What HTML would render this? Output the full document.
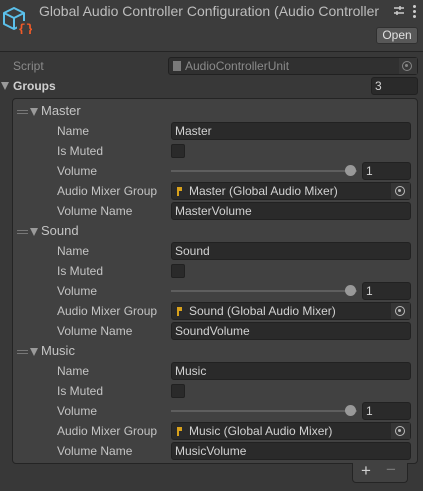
<!DOCTYPE html>
<html><head><meta charset="utf-8"><style>
*{margin:0;padding:0;box-sizing:border-box}
body{width:423px;height:491px;background:#383838;font-family:"Liberation Sans",sans-serif;font-size:12px;color:#c4c4c4;position:relative;overflow:hidden}
.a{position:absolute;white-space:nowrap}
.f{position:absolute;background:#2a2a2a;border:1px solid #212121;border-radius:3px;height:18px;line-height:16px;padding-left:3px;color:#d2d2d2}
.lbl{position:absolute;left:57px;line-height:20px}
.obj{position:absolute;left:171px;width:240px;height:18px;background:#2a2a2a;border:1px solid #212121;border-radius:3px;line-height:16px;padding-left:17px;color:#d2d2d2}
.obj .ic{position:absolute;left:5px;top:4px;width:5px;height:9px;background:#d9a21b}
.obj .ic:after{content:"";position:absolute;left:2px;top:4px;width:3px;height:5px;background:#2a2a2a}
.obj .t{position:absolute;right:0;top:0;width:19px;height:16px;background:#353535}
.tg{position:absolute;right:5px;top:3px;width:10px;height:10px;border:1.5px solid #bbb;border-radius:50%}
.tg:after{content:"";position:absolute;left:2px;top:2px;width:3px;height:3px;background:#bbb;border-radius:50%}
.tri{position:absolute;width:0;height:0;border-left:4.5px solid transparent;border-right:4.5px solid transparent;border-top:8px solid #9a9a9a}
.cb{position:absolute;left:171px;width:14px;height:14px;background:#2a2a2a;border:1px solid #212121;border-radius:2px}
.sl{position:absolute;left:171px;width:186px;height:2px;background:#5e5e5e}
.kn{position:absolute;left:345px;width:11px;height:11px;border-radius:50%;background:#999}
</style></head><body>
<div class="a" style="left:0;top:0;width:423px;height:52px;background:#3c3c3c;border-bottom:1px solid #242424"></div>
<svg class="a" style="left:2px;top:6px" width="30" height="28" viewBox="0 0 30 28">
<path d="M12 2 L22 7 L22 18 L12 23 L2 18 L2 7 Z M2 7 L12 12 L22 7 M12 12 L12 23" fill="none" stroke="#5bc0eb" stroke-width="2" stroke-linejoin="round"/>
<rect x="15" y="15" width="14" height="13" fill="#3c3c3c"/>
<text x="16" y="27" font-family="Liberation Mono" font-size="13" font-weight="bold" fill="#f05a28">{}</text>
</svg>
<div class="a" style="left:39px;top:3px;font-size:14px;color:#bdbdbd">Global Audio Controller Configuration (Audio Controller</div>
<svg class="a" style="left:393px;top:5px" width="12" height="12" viewBox="0 0 12 12"><path d="M1 3h10M1 8h10" stroke="#ccc" stroke-width="1.5"/><path d="M7 1v4M4 6v4" stroke="#ccc" stroke-width="1.5"/></svg>
<div class="a" style="left:413px;top:5px;width:3px;height:3px;background:#ccc;border-radius:50%;box-shadow:0 5px 0 #ccc,0 10px 0 #ccc"></div>
<div class="a" style="left:376px;top:27px;width:42px;height:17px;background:#585858;border:1px solid #303030;border-radius:3px;text-align:center;line-height:15px;color:#e0e0e0;font-size:12px">Open</div>

<div class="a" style="left:13px;top:58px;line-height:16px;color:#8a8a8a">Script</div>
<div class="f" style="left:168px;top:57px;width:250px;color:#8a8a8a;padding-left:16px;background:#303030"><div class="a" style="left:4px;top:3px;width:8px;height:10px;background:#7a7a7a"></div>AudioControllerUnit<div class="a" style="right:0;top:0;width:18px;height:16px;background:#383838"><div class="tg" style="opacity:.6"></div></div></div>
<div class="tri" style="left:1px;top:82px"></div>
<div class="a" style="left:13px;top:78px;line-height:16px;font-weight:bold;color:#d0d0d0">Groups</div>
<div class="f" style="left:371px;top:77px;width:47px">3</div>

<div class="a" style="left:12px;top:98px;width:406px;height:366px;background:#414141;border:1px solid #242424;border-radius:4px"></div>
<div class="a" style="left:352px;top:463px;width:56px;height:20px;background:#414141;border:1px solid #242424;border-top:none;border-radius:0 0 4px 4px"></div>
<div class="a" style="left:361px;top:461px;font-size:17px;color:#d0d0d0">+</div>
<div class="a" style="left:386px;top:460px;font-size:17px;color:#777">−</div>

<div id="g"></div>
<script>
var names=["Master","Sound","Music"],h="";
names.forEach(function(n,i){var y=101+i*120;
h+='<div class="a" style="left:17px;top:'+(y+9)+'px;width:11px;height:1px;background:#777;box-shadow:0 3px 0 #777"></div>';
h+='<div class="tri" style="left:30px;top:'+(y+7)+'px"></div>';
h+='<div class="a" style="left:41px;top:'+y+'px;line-height:20px;font-size:13px">'+n+'</div>';
var L=["Name","Is Muted","Volume","Audio Mixer Group","Volume Name"];
L.forEach(function(l,j){h+='<div class="lbl" style="top:'+(y+20*(j+1))+'px">'+l+'</div>';});
h+='<div class="f" style="left:171px;top:'+(y+21)+'px;width:240px">'+n+'</div>';
h+='<div class="cb" style="top:'+(y+43)+'px"></div>';
h+='<div class="sl" style="top:'+(y+69)+'px"></div><div class="kn" style="top:'+(y+64)+'px"></div>';
h+='<div class="f" style="left:362px;top:'+(y+61)+'px;width:49px">1</div>';
h+='<div class="obj" style="top:'+(y+81)+'px"><div class="ic"></div>'+n+' (Global Audio Mixer)<div class="t"><div class="tg"></div></div></div>';
h+='<div class="f" style="left:171px;top:'+(y+101)+'px;width:240px">'+n+'Volume</div>';
});
document.getElementById("g").innerHTML=h;
</script>
</body></html>
